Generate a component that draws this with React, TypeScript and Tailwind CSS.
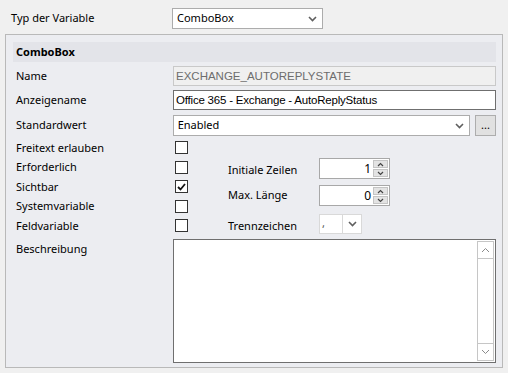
import React from "react";

const Chevron = ({ color = "#5f5f5f" }: { color?: string }) => (
  <svg width="9" height="6" viewBox="0 0 9 6">
    <path d="M1 1 L4.5 4.5 L8 1" fill="none" stroke={color} strokeWidth="1.6" />
  </svg>
);

const SmallArrow = ({ up }: { up?: boolean }) => (
  <svg width="7" height="5" viewBox="0 0 7 5">
    <path
      d={up ? "M1 4 L3.5 1.5 L6 4" : "M1 1 L3.5 3.5 L6 1"}
      fill="none"
      stroke="#444"
      strokeWidth="1.2"
    />
  </svg>
);

const Check = ({ checked }: { checked?: boolean }) => (
  <div className="w-[13px] h-[13px] border border-[#333] bg-white flex items-center justify-center flex-none">
    {checked && (
      <svg width="9" height="8" viewBox="0 0 9 8">
        <path d="M1 4 L3.5 6.5 L8 1" fill="none" stroke="#111" strokeWidth="1.8" />
      </svg>
    )}
  </div>
);

const Spinner = ({ value }: { value: string }) => (
  <div className="w-[71px] h-[21px] border border-[#a8a8a8] bg-white flex">
    <div className="flex-1 text-right pr-[2px] text-[12px] leading-[19px] text-black">{value}</div>
    <div className="w-[16px] flex flex-col gap-[1px] p-[1px] pl-0">
      <div className="flex-1 bg-[#e3e3e3] border border-[#c4c4c4] flex items-center justify-center">
        <SmallArrow up />
      </div>
      <div className="flex-1 bg-[#e3e3e3] border border-[#c4c4c4] flex items-center justify-center">
        <SmallArrow />
      </div>
    </div>
  </div>
);

const checkRows = [
  { label: "Freitext erlauben", checked: false },
  { label: "Erforderlich", checked: false },
  { label: "Sichtbar", checked: true },
  { label: "Systemvariable", checked: false },
  { label: "Feldvariable", checked: false },
];

export default function App() {
  return (
    <div className="w-[508px] h-[373px] bg-[#f0f0f0] text-[11px] text-black font-['Noto_Sans',sans-serif] overflow-hidden">
      <div className="flex items-center pt-[8px] pl-[11px]">
        <div className="w-[161px]">Typ der Variable</div>
        <div className="w-[151px] h-[21px] border border-[#acacac] bg-white flex items-center justify-between pl-[4px] pr-[5px]">
          <span>ComboBox</span>
          <Chevron />
        </div>
      </div>

      <div className="mt-[5px] mx-[5px] h-[334px] border border-[#b9b9b9] bg-[#ecedf1] pt-[7px] pl-[7px] pr-[6px]">
        <div className="h-[20px] bg-[#e3e4e9] pl-[3px] flex items-center font-bold">ComboBox</div>

        <div className="pl-[3px]">
          <div className="flex items-center mt-[4px] h-[20px]">
            <div className="w-[157px]">Name</div>
            <div className="flex-1 h-[20px] border border-[#c9c9c9] bg-[#f0f0f0] text-[#6d6d6d] pl-[2px] leading-[18px] font-['Liberation_Sans',sans-serif] text-[11.5px]">
              EXCHANGE_AUTOREPLYSTATE
            </div>
          </div>

          <div className="flex items-center mt-[4px] h-[20px]">
            <div className="w-[157px]">Anzeigename</div>
            <div className="flex-1 h-[20px] border border-[#6f6f6f] bg-white pl-[2px] leading-[18px] font-['Liberation_Sans',sans-serif] text-[11.5px] tracking-[-0.2px]">
              Office 365 - Exchange - AutoReplyStatus
            </div>
          </div>

          <div className="flex items-center mt-[5px] h-[21px]">
            <div className="w-[157px]">Standardwert</div>
            <div className="w-[298px] h-[21px] border border-[#acacac] bg-white flex items-center justify-between pl-[4px] pr-[5px]">
              <span>Enabled</span>
              <Chevron />
            </div>
            <div className="ml-[5px] w-[21px] h-[21px] border border-[#adadad] bg-[#e1e1e1] flex items-center justify-center leading-none pb-[3px]">
              ...
            </div>
          </div>

          <div className="flex mt-[2px] h-[101px]">
            <div className="flex flex-col">
              {checkRows.map((r) => (
                <div key={r.label} className="flex items-center h-[19.5px]">
                  <div className="w-[159px]">{r.label}</div>
                  <Check checked={r.checked} />
                </div>
              ))}
            </div>

            <div className="ml-[40px] pt-[20px] flex flex-col">
              <div className="flex items-center h-[21px]">
                <div className="w-[91px] pt-[3px]">Initiale Zeilen</div>
                <Spinner value="1" />
              </div>
              <div className="flex items-center h-[21px] mt-[6px]">
                <div className="w-[91px]">Max. Länge</div>
                <Spinner value="0" />
              </div>
              <div className="flex items-center h-[20px] mt-[8px]">
                <div className="w-[91px] pt-[5px]">Trennzeichen</div>
                <div className="w-[43px] h-[20px] border border-[#d9d9d9] flex">
                  <div className="w-[23px] bg-white border-r border-[#d9d9d9] pl-[2px] leading-[15px] text-[#555]">,</div>
                  <div className="flex-1 bg-white flex items-center justify-center">
                    <Chevron />
                  </div>
                </div>
              </div>
            </div>
          </div>

          <div className="flex">
            <div className="w-[157px] pt-[2px]">Beschreibung</div>
            <div className="w-[324px] h-[124px] border border-[#6f6f6f] bg-white flex justify-end p-[1px]">
              <div className="w-[17px] h-full border border-[#c6c6c6] flex flex-col justify-between">
                <div className="h-[17px] border-b border-[#c6c6c6] flex items-center justify-center">
                  <svg width="9" height="6" viewBox="0 0 9 6">
                    <path d="M1 5 L4.5 1.5 L8 5" fill="none" stroke="#8a8a8a" strokeWidth="1" />
                  </svg>
                </div>
                <div className="h-[17px] border-t border-[#c6c6c6] flex items-center justify-center">
                  <svg width="9" height="6" viewBox="0 0 9 6">
                    <path d="M1 1 L4.5 4.5 L8 1" fill="none" stroke="#8a8a8a" strokeWidth="1" />
                  </svg>
                </div>
              </div>
            </div>
          </div>
        </div>
      </div>
    </div>
  );
}
